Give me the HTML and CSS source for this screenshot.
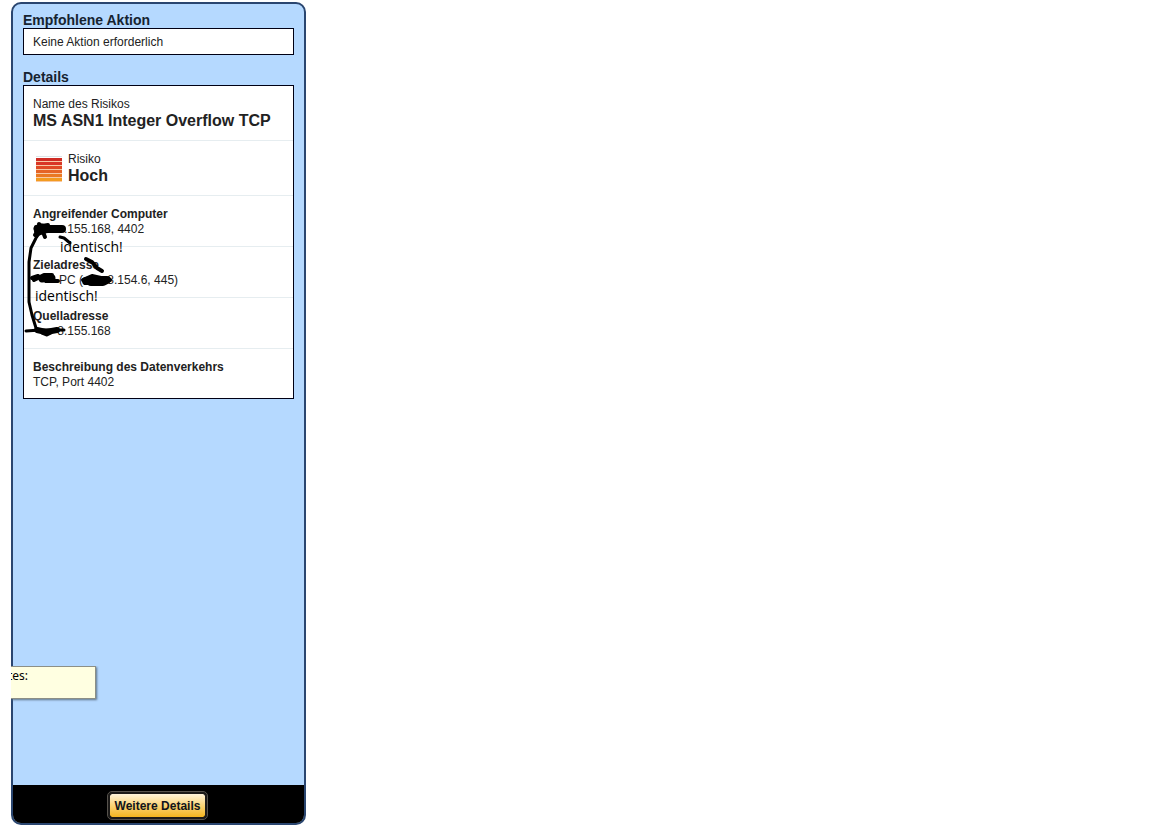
FILE: index.html
```html
<!DOCTYPE html>
<html lang="de">
<head>
<meta charset="utf-8">
<meta name="viewport" content="width=device-width, initial-scale=1">
<title>Details</title>
<link rel="stylesheet" href="styles.css">
</head>
<body>
<main class="panel">
  <div class="panel-body">
    <section class="section">
      <h2 class="heading">Empfohlene Aktion</h2>
      <p class="box action">Keine Aktion erforderlich</p>
    </section>
    <section class="section">
      <h2 class="heading">Details</h2>
      <div class="box details">
        <div class="row">
          <div class="text">Name des Risikos</div>
          <div class="title">MS ASN1 Integer Overflow TCP</div>
        </div>
        <div class="row risk">
          <svg class="risk-icon" width="26" height="27" viewBox="0 0 26 27" aria-hidden="true">
            <path fill="#dde3e6" d="M0 1h26v1H0z"/>
            <path fill="#f8c9a4" d="M0 3h26v24H0z"/>
            <path fill="#cf2b24" d="M0 3h26v3H0z"/>
            <path fill="#d93626" d="M0 7h26v3H0z"/>
            <path fill="#df4a25" d="M0 11h26v3H0z"/>
            <path fill="#e56426" d="M0 15h26v3H0z"/>
            <path fill="#ea7922" d="M0 19h26v3H0z"/>
            <path fill="#f39b20" d="M0 23h26v3H0z"/>
          </svg>
          <div>
            <div class="text">Risiko</div>
            <div class="title">Hoch</div>
          </div>
        </div>
        <div class="row">
          <h3 class="label">Angreifender Computer</h3>
          <div class="text"><span class="redacted"></span>.155.168, 4402</div>
        </div>
        <div class="row">
          <h3 class="label">Zieladresse</h3>
          <div class="text"><span class="redacted host"></span>PC (<span class="redacted">8</span>.154.6, 445)</div>
        </div>
        <div class="row">
          <h3 class="label">Quelladresse</h3>
          <div class="text"><span class="redacted">8</span>.155.168</div>
        </div>
        <div class="row">
          <h3 class="label">Beschreibung des Datenverkehrs</h3>
          <div class="text">TCP, Port 4402</div>
        </div>
        <svg class="marks" width="100" height="260" viewBox="24 86 100 260" aria-hidden="true">
          <g fill="none" stroke="#000" stroke-linecap="round" stroke-linejoin="round">
            <path stroke-width="3" d="M41 231L36 238L31 248L29 262L29 280L29 302L32 315L36 328"/>
            <path stroke-width="4" d="M35 235L41 227L45 237M39 224L46 231M36 227L48 225L36 232L48 231"/>
            <path stroke-width="7" d="M37 229L42 227L39 232L48 229"/>
            <path stroke-width="8" d="M46 229H62"/>
            <path stroke-width="3" d="M60 237L64 238L70 243"/>
            <path stroke-width="4" d="M86 259L92 262L97 268L102 271"/>
            <path stroke-width="4" d="M32 278L38 276L34 280L44 275L52 275L46 281L58 281"/>
            <path stroke-width="7" d="M42 279L52 278"/>
            <path stroke-width="8" d="M86 281L92 280L107 280L103 282L91 282"/>
            <path stroke-width="4" d="M83 280L92 276L110 280"/>
            <path stroke-width="3" d="M26 331L40 330L64 330"/>
            <path stroke-width="6" d="M37 330L46 332L57 330"/>
            <path stroke-width="3" d="M42 333L47 335L51 333"/>
          </g>
        </svg>
        <span class="note note-top">identisch!</span>
        <span class="note note-bottom">identisch!</span>
      </div>
    </section>
  </div>
  <footer class="footer">
    <button class="button" type="button">Weitere Details</button>
  </footer>
  <div class="tooltip"><div class="tooltip-text">tes:</div></div>
</main>
</body>
</html>
```
FILE: styles.css
```css
* {
  box-sizing: border-box;
}

body {
  display: flex;
  min-height: 100vh;
  margin: 0;
  padding: 2px 11px 10px;
  background: #fff;
  color: #222;
  font: 12px/15px "Liberation Sans", Arial, sans-serif;
}

h2, h3, p {
  margin: 0;
}

.panel {
  position: relative;
  display: flex;
  flex-direction: column;
  width: 100%;
  max-width: 295px;
  border: 2px solid #2a4670;
  border-radius: 10px;
  background: #b5d9ff;
}

.panel-body {
  display: flex;
  flex: 1;
  flex-direction: column;
  gap: 14px;
  padding: 8px 10px;
}

.heading {
  color: #162330;
  font-size: 14px;
  line-height: 16px;
}

.box {
  border: 1px solid #000014;
  background: #fff;
}

.action {
  padding: 6px 9px 4px;
}

.details {
  position: relative;
}

.row {
  padding: 11px 9px 9px;
  border-bottom: 1px solid #e6edf0;
}

.row:nth-of-type(6) {
  padding-bottom: 8px;
  border-bottom: 0;
}

.title {
  margin-bottom: 2px;
  font-size: 16px;
  font-weight: bold;
  line-height: 17px;
}

.label {
  font-size: 12px;
  line-height: 15px;
}

.risk {
  display: flex;
  gap: 6px;
  padding-left: 12px;
}

.risk-icon {
  margin-top: 3px;
}

.redacted {
  display: inline-block;
  width: 31px;
  text-align: right;
}

.host {
  width: 26px;
}

.marks {
  position: absolute;
  top: 0;
  left: 0;
}

.note {
  position: absolute;
  color: #000;
  font: 14px/16px "Open Sans", "Noto Sans", sans-serif;
}

.note-top {
  top: 153px;
  left: 36px;
}

.note-bottom {
  top: 202px;
  left: 11px;
}

.footer {
  display: flex;
  justify-content: center;
  padding: 7px 12px 4px 10px;
  border-radius: 0 0 8px 8px;
  background: #000;
}

.button {
  padding: 4px 5px 3px;
  border: 2px solid #1c1a18;
  border-radius: 4px;
  outline: 1px solid #57534d;
  background: linear-gradient(#fff3da, #fbd77f 45%, #f3b41f) padding-box;
  color: #10141c;
  font: bold 12px/16px "Liberation Sans", Arial, sans-serif;
}

.tooltip {
  position: absolute;
  bottom: 124px;
  left: -2px;
  width: 85px;
  height: 33px;
  border: 1px solid #8c8f86;
  border-left: 0;
  background: #ffffe1;
  box-shadow: 1px 1px 2px #5f7488;
  clip-path: inset(0 -6px -6px 0);
}

.tooltip-text {
  overflow: hidden;
  padding-top: 2px;
  color: #000;
  font: 12px/14px "Noto Sans", sans-serif;
  text-indent: -3px;
}
```
